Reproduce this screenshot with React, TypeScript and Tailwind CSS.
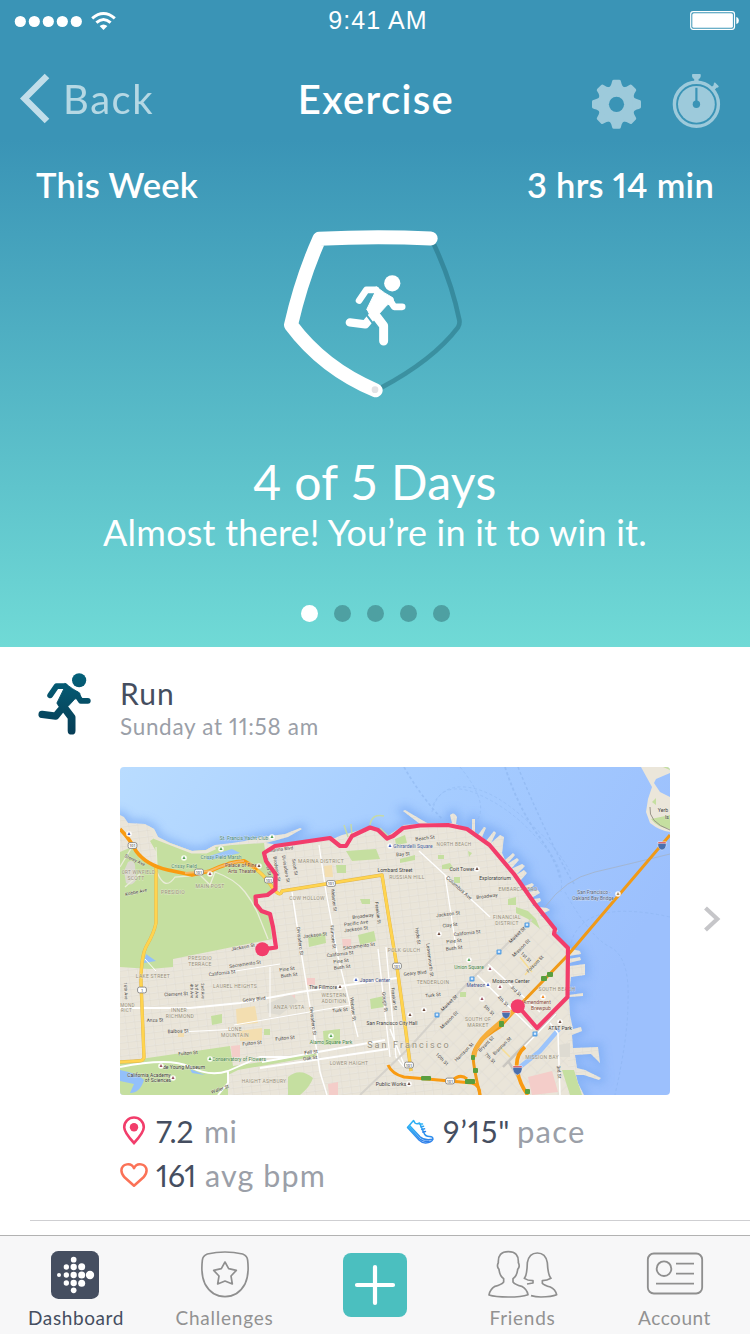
import React from "react";

const FONT = "font-['Lato','Noto_Sans',sans-serif]";

function Runner({ className, fill, gap }: { className: string; fill: string; gap?: string }) {
  return (
    <svg viewBox="253 195 183 214" className={className} fill="none">
      <defs>
        <linearGradient id="navy" x1="0" y1="195" x2="0" y2="409" gradientUnits="userSpaceOnUse">
          <stop offset="0" stopColor="#04617a" />
          <stop offset="0.6" stopColor="#064a62" />
          <stop offset="1" stopColor="#073d56" />
        </linearGradient>
      </defs>
      <g stroke={fill} strokeLinecap="round" strokeLinejoin="round">
        <circle cx="395" cy="220" r="24.5" fill={fill} stroke="none" />
        <path d="M267 338L314 344L332 322" strokeWidth="25" />
        {gap && <path d="M312 308L343 349" stroke={gap} strokeWidth="6" />}
        <path d="M295 272L317 240H346" strokeWidth="20" />
        <path d="M385 268L401 291H425" strokeWidth="20" />
        <path d="M334 302L369 348V394" strokeWidth="27" />
        <path d="M347 231L372 249L397 264L400 278L380 285L357 310L336 318L318 299L342 250Z" fill={fill} strokeWidth="3" />
      </g>
    </svg>
  );
}

function StatusBar() {
  return (
    <div className="flex h-[40px] items-center">
      <svg className="h-[40px] w-[250px]" viewBox="0 0 250 40" fill="#fff">
        {[20.3, 34.3, 48.3, 62.3, 76.3].map((x) => (
          <circle key={x} cx={x} cy="21.5" r="5.6" />
        ))}
        <g fill="none" stroke="#fff" strokeWidth="3">
          <path d="M92.2 18.4Q103.500 8.600 114.800 18.400" />
          <path d="M96.400 22.600Q103.500 16.400 110.600 22.600" />
        </g>
        <path d="M99.600 26Q103.500 22.800 107.400 26L103.500 30Z" />
      </svg>
      <div className="h-[40px] w-[256px] text-center font-['Liberation_Sans',Arial,sans-serif] text-[25px] leading-[41px] tracking-[1.1px] text-white">
        9:41 AM
      </div>
      <svg className="h-[40px] w-[244px]" viewBox="506 0 244 40">
        <rect x="690.700" y="11.700" width="43.800" height="17.600" rx="2.500" fill="none" stroke="#fff" strokeWidth="1.200" />
        <rect x="692.300" y="13.200" width="40.600" height="14.600" rx="1.600" fill="#fff" />
        <path d="M736.300 17Q738.800 17.500 738.800 20.500T736.300 24Z" fill="#fff" />
      </svg>
    </div>
  );
}

function NavBar() {
  return (
    <div className="flex h-[110px]">
      <div className="flex w-[250px] pl-[20px] text-[#c3e0ea]">
        <svg className="mt-[33px] h-[52px] w-[30px]" viewBox="0 0 30 52" fill="none">
          <path d="M27 3L4.500 25.500L27 48" stroke="#c1deea" strokeWidth="6.500" />
        </svg>
        <span className="ml-[13px] pt-[34px] text-[40px] leading-[50px] tracking-[1.6px] opacity-90">Back</span>
      </div>
      <h1 className="w-[252px] pt-[34px] text-center text-[40px] leading-[50px] font-semibold tracking-[1.350px] text-white">Exercise</h1>
      <svg className="h-[110px] w-[248px]" viewBox="502 40 248 110">
        <defs>
          <mask id="gearHole">
            <rect x="580" y="70" width="80" height="70" fill="#fff" />
            <circle cx="616.500" cy="104.300" r="7.600" fill="#000" />
          </mask>
        </defs>
        <g mask="url(#gearHole)" fill="#9dcadb">
          <circle cx="616.500" cy="104.300" r="18.600" />
          {[0, 45, 90, 135, 180, 225, 270, 315].map((a) => (
            <path
              key={a}
              transform={`rotate(${a} 616.500 104.300)`}
              d="M607.500 88.500Q611.200 86.500 611.900 82Q612.200 79.800 613.600 79.800H619.400Q620.800 79.800 621.100 82Q621.800 86.500 625.500 88.500Z"
            />
          ))}
        </g>
        <g fill="#9dcadb">
          <circle cx="696.400" cy="104.300" r="22" fill="none" stroke="#9dcadb" strokeWidth="3.400" />
          <circle cx="696.400" cy="104.300" r="18.400" />
          <path d="M692.300 74H700.500Q701.500 76.500 700 78.200L698.600 79V82H694.200V79L692.800 78.200Q691.300 76.500 692.300 74Z" />
          <path d="M712.300 90L711 87.500L713.600 85.200Q713.400 83 714.800 82.200L718.800 86.200Q718.300 88 716.500 87.800L714.300 90.300Z" />
          <path d="M696.400 87.800V104" stroke="#3a94b6" strokeWidth="2.200" />
          <circle cx="696.400" cy="104.300" r="3.700" fill="#3a94b6" />
        </g>
      </svg>
    </div>
  );
}

function Hero() {
  return (
    <section className="h-[647px] w-[750px] bg-[linear-gradient(180deg,#3a94b6_0px,#3a94b6_140px,#70dad6_647px)]">
      <StatusBar />
      <NavBar />
      <div className="flex h-[70px] justify-between pr-[36px] pl-[36px] text-[34.500px] leading-[70px] font-semibold text-white">
        <span className="tracking-[0.200px]">This Week</span>
        <span className="tracking-[0.250px] proportional-nums">3 hrs 14 min</span>
      </div>
      <div className="grid h-[200px] place-items-center">
        <div className="col-start-1 row-start-1">
          <svg className="h-[200px] w-[230px]" viewBox="0 30 690 600" fill="none">
            <path d="M518 95Q575 215 598 330Q600 342 594 352Q520 450 360 535" stroke="#1f6675" strokeOpacity="0.45" strokeWidth="14" />
            <path
              d="M512 85.500Q345 77 178 86.500Q125 205 93 345Q190 475 347 541"
              stroke="#fff"
              strokeWidth="42"
              strokeLinecap="round"
              strokeLinejoin="round"
            />
            <circle cx="345" cy="539" r="10" fill="#e2e2e4" />
          </svg>
        </div>
        <div className="col-start-1 row-start-1 pb-[19px]">
          <Runner className="h-[71px] w-[61px]" fill="#fff" gap="#4ba9c1" />
        </div>
      </div>
      <div className="flex flex-col items-center pt-[31px] text-white">
        <p className="text-[48px] leading-[61px] font-normal tracking-[0.350px]">4 of 5 Days</p>
        <p className="text-[36px] leading-[41px] tracking-[0.230px]">Almost there! You’re in it to win it.</p>
      </div>
      <div className="flex justify-center gap-[16px] pt-[52px] pl-px">
        <i className="size-[17px] rounded-full bg-white" />
        <i className="size-[17px] rounded-full bg-[#4ea0a2]" />
        <i className="size-[17px] rounded-full bg-[#4ea0a2]" />
        <i className="size-[17px] rounded-full bg-[#4ea0a2]" />
        <i className="size-[17px] rounded-full bg-[#4ea0a2]" />
      </div>
    </section>
  );
}

type Label = [string, number, number, number?, string?, number?];
const AREA = "#978f7a";
const STREET = "#45423d";
const PARK = "#43864a";
const POI = "#3c3c3c";

// text, x, y (centre), rotation, colour, size
const LABELS: Label[] = [
  ["St. Francis Yacht Club", 124, 71, 0, "#4a8a78", 4.900],
  ["Crissy Field Marsh", 101, 90, 0, "#4a8a78", 4.900],
  ["Crissy Field", 64, 99, 0, "#4a8a68", 4.900],
  ["Palace of Fine", 121, 98, 0, "#6d4a3c", 5],
  ["Arts Theatre", 122, 104, 0, "#6d4a3c", 5],
  ["ORT WINFIELD", 18.500, 105, 0, AREA, 4.600],
  ["SCOTT", 16, 111, 0, AREA, 5],
  ["MAIN POST", 90, 119, 0, AREA, 5],
  ["PRESIDIO", 53, 125, 0, AREA, 5],
  ["Storey Ave", 15, 93, 25, STREET, 4.600],
  ["Kobbe Ave", 16, 125, -12, STREET, 4.600],
  ["MARINA DISTRICT", 201, 94, 0, AREA, 5],
  ["COW HOLLOW", 187, 131, 0, AREA, 5],
  ["Baker St", 148, 100, 78, STREET, 4.600],
  ["Broderick St", 157, 102, 80, STREET, 4.600],
  ["Divisadero St", 166, 102, 80, STREET, 4.600],
  ["Scott St", 175, 100, 80, STREET, 4.600],
  ["Marina Blvd", 161, 82, -7, STREET, 4.600],
  ["Webster St", 214, 133, 83, STREET, 4.600],
  ["Franklin St", 258, 146, 83, STREET, 4.600],
  ["Broadway", 243, 149, -7, STREET, 4.800],
  ["Pacific Ave", 236, 156, -7, STREET, 4.800],
  ["Jackson St", 236, 162, -7, STREET, 4.800],
  ["Ghirardelli Square", 293, 79, 0, "#4460a0", 4.900],
  ["NORTH BEACH", 334, 77.500, 0, AREA, 4.700],
  ["Beach St", 305, 71, -7, STREET, 4.800],
  ["Bay St", 283, 87, -4, STREET, 4.800],
  ["Lombard Street", 275, 103, 0, POI, 5],
  ["RUSSIAN HILL", 287, 110, 0, AREA, 5],
  ["Coit Tower", 342, 102, 0, POI, 5.200],
  ["Exploratorium", 375, 111, 0, POI, 5],
  ["EMBARCADERO", 398, 122, 0, AREA, 5],
  ["Columbus Ave", 339, 121, 42, STREET, 5],
  ["Broadway", 367, 129, -7, STREET, 4.800],
  ["FINANCIAL", 387, 150, 0, AREA, 5],
  ["DISTRICT", 387, 156, 0, AREA, 5],
  ["Jackson St", 328, 147, -7, STREET, 4.800],
  ["Clay St", 330, 158, -7, STREET, 4.800],
  ["San Francisco -", 474, 125, 0, "#53627e", 4.800],
  ["Oakland Bay Bridge", 473, 131, 0, "#53627e", 4.700],
  ["Yerb", 543, 43, 0, POI, 5.200],
  ["Is", 547, 50, 0, POI, 5.200],
  ["Jackson St", 123, 180, -10, STREET, 4.800],
  ["PRESIDIO", 80, 191, 0, AREA, 5],
  ["TERRACE", 80, 197, 0, AREA, 5],
  ["Sacramento St", 125, 197, -8, STREET, 4.800],
  ["California St", 102, 206, -7, STREET, 4.800],
  ["LAKE STREET", 33, 209, 0, AREA, 5],
  ["LAUREL HEIGHTS", 115, 219, 0, AREA, 5],
  ["Clement St", 56, 227, -3, STREET, 4.800],
  ["Geary Blvd", 134, 232, -6, STREET, 4.800],
  ["16th Ave", 6, 224, 87, STREET, 4.300],
  ["4th Ave", 72, 224, 87, STREET, 4.300],
  ["3rd Ave", 77, 224, 87, STREET, 4.300],
  ["2nd Ave", 83, 224, 87, STREET, 4.300],
  ["MOND", 7.500, 238, 0, AREA, 4.600],
  ["RICT", 6.500, 243.500, 0, AREA, 4.600],
  ["INNER", 59, 243, 0, AREA, 5],
  ["RICHMOND", 60, 249, 0, AREA, 5],
  ["Anza St", 35, 253, -2, STREET, 4.800],
  ["Balboa St", 58, 264, -3, STREET, 4.800],
  ["ANZA VISTA", 169, 240, 0, AREA, 5],
  ["LONE", 115, 262, 0, AREA, 5],
  ["MOUNTAIN", 115, 268, 0, AREA, 5],
  ["Fulton St", 132, 276, -6, STREET, 4.800],
  ["Fulton St", 165, 271, -6, STREET, 4.800],
  ["Fulton St", 68, 286, -5, STREET, 4.800],
  ["Pine St", 167, 202, -7, STREET, 4.800],
  ["Bush St", 169, 208, -7, STREET, 4.800],
  ["Jackson St", 195, 168, -7, STREET, 4.800],
  ["Sacramento St", 239, 179, -7, STREET, 4.800],
  ["California St", 220, 187, -7, STREET, 4.800],
  ["Pine St", 221, 194, -7, STREET, 4.800],
  ["Bush St", 222, 200, -7, STREET, 4.800],
  ["Divisadero St", 180, 174, 83, STREET, 4.800],
  ["Divisadero St", 193, 254, 83, STREET, 4.800],
  ["Fillmore St", 213, 170, 83, STREET, 4.800],
  ["Webster St", 233, 242, 83, STREET, 4.800],
  ["Gough St", 265, 235, 83, STREET, 4.800],
  ["Franklin St", 274, 232, 83, STREET, 4.800],
  ["The Fillmore", 203, 220, 0, POI, 5],
  ["Japan Center", 255, 213, 0, "#3f4f8c", 5],
  ["WESTERN", 214, 228, 0, AREA, 5],
  ["ADDITION", 214, 234, 0, AREA, 5],
  ["Turk St", 220, 243, -6, STREET, 4.800],
  ["San Francisco City Hall", 272, 256, 0, POI, 4.900],
  ["Alamo Square Park", 211, 275, 0, PARK, 4.900],
  ["Fell St", 191, 285, -7, STREET, 4.800],
  ["Oak St", 190, 291, -7, STREET, 4.800],
  ["LOWER HAIGHT", 229, 296, 0, AREA, 4.900],
  ["Conservatory of Flowers", 119, 292, 0, PARK, 4.900],
  ["de Young Museum", 64, 300, 0, POI, 5],
  ["California Academy", 29, 308, 0, POI, 4.900],
  ["of Sciences", 38, 313, 0, POI, 5],
  ["HAIGHT ASHBURY", 144, 314, 0, AREA, 4.900],
  ["Waller St", 100, 322, -20, STREET, 4.600],
  ["Public Works", 271, 317, 0, POI, 5.200],
  ["POLK GULCH", 284, 183, 0, AREA, 5],
  ["California St", 347, 166, -7, STREET, 4.800],
  ["Pine St", 334, 174, -7, STREET, 4.800],
  ["Bush St", 334, 181, -7, STREET, 4.800],
  ["Hyde St", 298, 169, 83, STREET, 4.800],
  ["Leavenworth St", 310, 193, 83, STREET, 4.800],
  ["Geary Blvd", 295, 206, -6, STREET, 4.800],
  ["TENDERLOIN", 313, 215, 0, AREA, 5],
  ["Turk St", 313, 228, -6, STREET, 4.800],
  ["Union Square", 349, 200, 0, PARK, 4.900],
  ["Metreon", 356, 218, 0, "#3f4f8c", 5],
  ["Moscone Center", 391, 214, 0, POI, 5],
  ["Market St", 397, 168, -45, STREET, 4.800],
  ["Mission St", 401, 181, -45, STREET, 4.800],
  ["1st St", 406, 190, 45, STREET, 4.800],
  ["Folsom St", 415, 197, -45, STREET, 4.800],
  ["3rd St", 396, 224, 45, STREET, 4.800],
  ["4th St", 383, 234, 45, STREET, 4.800],
  ["5th St", 369, 243, 45, STREET, 4.800],
  ["7th St", 370, 291, 45, STREET, 4.800],
  ["10th St", 322, 292, 45, STREET, 4.800],
  ["Market St", 329, 236, -45, STREET, 4.800],
  ["Mission St", 329, 253, -45, STREET, 4.800],
  ["Harrison St", 344, 285, -45, STREET, 4.800],
  ["Bryant St", 366, 277, -45, STREET, 4.800],
  ["Brannan St", 382, 279, -45, STREET, 4.800],
  ["SOUTH OF", 358, 252, 0, AREA, 5],
  ["MARKET", 358, 258, 0, AREA, 5],
  ["SOUTH BEACH", 437, 222, 0, AREA, 5],
  ["Amendment", 417, 235, 0, "#8a4c40", 5],
  ["Brewpub", 421, 241, 0, "#8a4c40", 5],
  ["AT&T Park", 440, 261, 0, POI, 5],
  ["MISSION BAY", 422, 290, 0, AREA, 5],
  ["3rd St", 439, 305, 85, STREET, 4.800],
];

const LAND =
  "M0 48L4 50L8 56L25 57L34 62L38 70L50 76L72 84L86 83L95 78L112 76L125 74L142 70L165 67L180 61L182 62L168 70L146 76L158 78L200 72L215 71L222 68L230 66L250 60L258 62L266 70L275 64L284 58L300 57L283 44L285 43L307 56L325 57L332 56L330 48Q334 44 337 50L336 57L347 62L352 63V52H355V65L358 68L364 60L366 61L362 70L366 74L374 64L376 66L371 76L380 68L384 70L382 86L385 93L393 86L395 88L387 97L397 91L399 93L391 102L402 97L405 99L396 108L404 103L407 106L401 113L400 121L412 116L414 118L404 126L418 123L420 126L408 133L420 131L421 134L412 139L427 141L430 143L420 148L432 158L438 164L434 167L448 181L460 184L461 187L449 189L448 192L460 190L461 193L449 196L450 199L465 197V208L451 210L449 228L463 226V229L449 230L450 248L453 262L461 260L462 264L452 268L453 281L478 280L480 296L471 287L455 288L457 301L465 303L481 311L479 313L464 308L456 308L458 316L464 328H0Z";

const PRESIDIO =
  "M0 85L12 80L20 92L37 98L37 86L30 74L36 70L72 84L95 80L112 78L144 76L146 90L152 100L156 122L148 128L136 130L136 140L142 145L150 148L152 172L53 192V200L30 202L0 200Z";

function Tree({ x, y, c = "#55a455" }: { x: number; y: number; c?: string }) {
  return (
    <g>
      <circle cx={x} cy={y} r="2.800" fill="#fff" fillOpacity="0.900" />
      <path d={`M${x} ${y - 2}l1.500 3h-3z`} fill={c} />
    </g>
  );
}

function Shield({ x, y, t }: { x: number; y: number; t: string }) {
  return (
    <g>
      <rect x={x - 4.400} y={y - 2.900} width="8.800" height="5.800" rx="1.800" fill="#fff" stroke="#777" strokeWidth="0.800" />
      <text x={x} y={y + 1.500} fontSize="4" fill="#333" textAnchor="middle">{t}</text>
    </g>
  );
}

function RouteMap() {
  return (
    <svg className="block h-[328px] w-[550px] rounded-[4px]" viewBox="0 0 550 328" fontFamily="Roboto, sans-serif">
      <defs>
        <linearGradient id="water" x1="0" y1="0" x2="1" y2="0.350">
          <stop offset="0" stopColor="#b9dcff" />
          <stop offset="0.550" stopColor="#a5ccff" />
          <stop offset="1" stopColor="#9cc0fd" />
        </linearGradient>
        <pattern id="grid" width="9" height="6.500" patternUnits="userSpaceOnUse" patternTransform="rotate(-7)">
          <path d="M0 0H9M0 0V6.500" stroke="#fbfaf6" strokeWidth="0.900" fill="none" />
          <path d="M0 0.900H9M0.900 0V6.500" stroke="#d3cec2" strokeWidth="0.450" fill="none" />
        </pattern>
        <pattern id="gridSoma" width="13" height="10" patternUnits="userSpaceOnUse" patternTransform="rotate(-45)">
          <path d="M0 0H13M0 0V10" stroke="#f8f6f1" strokeWidth="1" fill="none" />
          <path d="M0 0.900H13M0.900 0V10" stroke="#d3cec2" strokeWidth="0.450" fill="none" />
        </pattern>
        <clipPath id="landClip"><path d={LAND} /></clipPath>
        <filter id="coast" x="-5%" y="-5%" width="110%" height="110%"><feGaussianBlur stdDeviation="4" /></filter>
      </defs>
      <rect width="550" height="328" fill="url(#water)" />
      <path d={LAND} fill="none" stroke="#7fadf4" strokeWidth="8" opacity="0.800" filter="url(#coast)" />
      <g fill="none" stroke="#85aee8" strokeWidth="0.800" strokeDasharray="3 2.500" opacity="0.450">
        <path d="M284 0Q300 28 322 52" strokeWidth="1.600" />
        <path d="M312 45Q318 18 345 20T405 52Q438 80 450 105" />
        <path d="M313 38Q325 12 360 28T420 75Q445 98 441 125" />
        <path d="M385 0Q398 40 418 68T440 112" strokeWidth="1.800" />
        <path d="M398 0Q412 35 430 72T455 118" strokeWidth="1.400" />
        <path d="M340 0Q368 34 358 52" />
        <path d="M445 125Q470 170 490 180T508 235Q508 270 495 328" />
        <path d="M550 150Q460 130 450 180" />
      </g>
      <path d="M425 140Q445 112 475 105T550 87" fill="none" stroke="#a3b2c8" strokeWidth="0.800" />

      <path d="M521 0L532 20L528 32L526 45L530 56Q540 64 550 65V30L540 25L534 16L536 12L550 6V0Z" fill="#ebe6da" />
      <path d="M531 52L550 48V62Q538 61 531 52ZM532 35L536 31V38ZM543 0H550V3Z" fill="#c5dfa0" />
      <path d="M530 40Q528 55 550 63" stroke="#99958a" strokeWidth="1" fill="none" />

      <path d={LAND} fill="#eae5d9" />
      <g clipPath="url(#landClip)">
        <rect width="550" height="328" fill="url(#grid)" />
        <path d="M410 148L448 181V328H335L290 298Z" fill="#eae5d9" />
        <path d="M410 148L448 181V328H335L290 298Z" fill="url(#gridSoma)" />
        <path d={PRESIDIO} fill="#c5dfa0" />
        <path d="M30 57L36 70L72 84H86L95 80" fill="none" stroke="#ebe6d8" strokeWidth="5" />
        <path d="M8 95Q13 92 15 98L16 113Q12 120 6 116L4 104Z" fill="#dcd9d0" />
        <path d="M86 90L112 82L120 86L104 90L88 93Z" fill="#9cc6fa" />
        <path d="M0 295L110 279L113 299L163 292L197 285L198 289L118 303L108 308V328H0Z" fill="#c5dfa0" />
        <path d="M0 303Q10 305 18 308L24 313Q20 326 10 326L14 317L0 314ZM26 187L36 194L24 196ZM70 302L85 308L72 306Z" fill="#93c0fa" />
        <g fill="#c5dfa0">
          <path d="M226 84L256 82L260 92L232 94ZM216 98H226V106H217ZM188 170L205 166L206 176L189 180ZM238 168L254 164L256 174L240 178Z" />
          <path d="M203 264L220 262V276L204 278ZM91 249L102 247V256L92 258ZM168 310Q180 300 193 311Q190 320 180 328H168ZM250 232L264 229V240L251 242Z" />
          <path d="M322 98L330 96L334 102H322ZM388 132L396 130V138H388ZM396 140L408 144L416 152L420 162L408 152L396 146ZM334 110H340V116H334ZM275 72L285 68L287 76L276 78ZM348 84L352 86L349 90Z" />
          <path d="M442 303H454L462 328H450ZM144 262H150V268H144ZM240 132H250V137H242ZM413 318H422V324H413ZM340 225H346V230H340ZM318 88H324V92H318ZM280 92L295 88V93L280 96Z" />
        </g>
        <g fill="#f3deb0">
          <path d="M116 242L135 239L138 256L117 258ZM119 264L142 261V273L120 274ZM153 240H160V245H153ZM204 99L212 98L213 110H205ZM58 266H64V270H58Z" />
        </g>
        <g fill="#f4cdc9">
          <path d="M408 310L432 304L438 325L412 328ZM111 279L120 278V290H112ZM222 172H231V180H223ZM187 211H195V218H187ZM208 317L218 315V328H209ZM164 229L175 228V233H165Z" />
        </g>
        <path d="M147 237L170 227L178 234L160 248L148 246ZM438 278L450 276V290H440Z" fill="#dedbd2" />
        <path d="M439 262L420 284L400 300" stroke="#9cc4fb" strokeWidth="4.500" fill="none" />
        <path d="M383 300L420 262L436 247M388 294L398 310" stroke="#c9c6c0" strokeWidth="2.500" fill="none" />
        <g stroke="#fff" fill="none" strokeWidth="1.900">
          <path d="M0 241H70L120 236L180 225L277 211" />
          <path d="M172 125L180 178L190 240L200 305L207 328" strokeWidth="1.500" />
          <path d="M142 295L265 273M140 301L268 282M108 304L140 290L170 290M108 304V316L98 328M0 300Q50 290 70 300T108 304" />
          <path d="M199 78L206 125L218 190L238 270M258 182L270 290M266 180L276 290L284 300" strokeWidth="1.300" />
          <path d="M299 84L325 108L370 150M325 108L336 180" strokeWidth="1.300" />
          <path d="M357 208L412 262M368 197L420 245M430 256L438 266L440 328M270 262L285 300M404 280L436 247" strokeWidth="1.500" />
          <path d="M114 258L230 238M60 265L120 262M90 208L160 197M25 192L36 204M150 200V250" strokeWidth="1" />
        </g>
        <g stroke="#e9ecd8" fill="none" strokeWidth="1.300">
          <path d="M37 105Q45 125 55 110L80 108L90 118L95 105Q115 112 125 125T140 152L148 172M36 80L37 100M0 100L12 80M5 120L22 105" />
        </g>
        <path d="M412 152L342 222L290 280L240 328" stroke="#d5d2cb" strokeWidth="2" fill="none" />
        <path d="M400 190L412 205M405 208L420 190M380 280L390 290" stroke="#f7dd96" strokeWidth="1.500" fill="none" />
      </g>

      <g fill="none" strokeLinejoin="round">
        <g stroke="#dfb44c" strokeWidth="3.400">
          <path d="M36 100V156Q34 166 27 178Q21 188 21 215L24 290Q24 294 18 294L0 295" />
          <path d="M123 95Q140 102 150 117T162 124L262 108L270 158L277 200L285 258L291 304" />
        </g>
        <g stroke="#ffd44f" strokeWidth="2.700">
          <path d="M36 100V156Q34 166 27 178Q21 188 21 215L24 290Q24 294 18 294L0 295" />
          <path d="M123 95Q140 102 150 117T162 124L262 108L270 158L277 200L285 258L291 304" />
        </g>
        <g stroke="#f99b12" strokeWidth="3.800">
          <path d="M0 62Q10 72 16 84Q26 98 48 103L72 108L90 104Q112 94 124 94L138 102" />
          <path d="M550 68L470 162L448 188L397 241L380 260Q352 277 353 290T360 328" stroke="#f09a18" strokeWidth="3" />
          <path d="M398 240L368 266Q355 278 354 290" stroke="#f6ae3b" strokeWidth="4.500" />
          <path d="M405 280Q395 288 397 303Q400 318 408 328" />
          <path d="M268 298Q272 307 284 310L330 314L352 316Q360 318 360 328M332 314Q340 306 347 312" strokeWidth="3" />
        </g>
        <path d="M65 106L90 104Q112 94 124 94" stroke="#f5b967" strokeWidth="2" />
        <path d="M250 58Q252 46 264 49M228 70L224 58M232 69L231 57M260 61L268 69" stroke="#c5d9a8" strokeWidth="1.500" />
      </g>

      <g textAnchor="middle" stroke="#f3f0e8" strokeOpacity="0.550" strokeWidth="0.800" paintOrder="stroke">
        {LABELS.map(([t, x, y, r = 0, c = STREET, s = 5], i) => (
          <text key={i} x={x} y={y + 1.700} fontSize={s} fill={c} transform={`rotate(${r} ${x} ${y})`} letterSpacing={c === AREA ? 0.300 : 0.050}>
            {t}
          </text>
        ))}
        <text x="289" y="281" fontSize="9" fill="#96907e" letterSpacing="2.100">San Francisco</text>
      </g>

      <Tree x={152} y={70} />
      <Tree x={101} y={82} />
      <Tree x={64} y={91} />
      <Tree x={90} y={292} />
      <Tree x={211} y={269} />
      <Tree x={349} y={193} />
      <Tree x={9} y={67} c="#4460c0" />
      <Tree x={270} y={79} c="#4460c0" />
      <Tree x={236} y={213} c="#4460c0" />
      <Tree x={368} y={218} c="#4460c0" />
      <Tree x={41} y={299} c="#9a4f60" />
      <Tree x={53} y={311} c="#9a4f60" />
      <Tree x={90} y={107} c="#9a4f60" />
      <Tree x={139} y={99} c="#6d4a3c" />
      <Tree x={220} y={220} c="#6d4a3c" />
      <Tree x={319} y={167} c="#6d4a3c" />
      <Tree x={370} y={202} c="#9a4f60" />
      <Tree x={380} y={220} c="#9a4f60" />
      <Tree x={362} y={232} c="#9a4f60" />
      <Tree x={304} y={243} c="#6d4a3c" />
      <Tree x={290} y={248} c="#6d4a3c" />
      <Tree x={289} y={317} c="#6d4a3c" />
      <Tree x={440} y={255} c="#6d4a3c" />
      <Tree x={423} y={230} c="#f08a24" />
      <Tree x={498} y={127} c="#a98b66" />
      <Tree x={357} y={102} c="#6d4a3c" />
      <Shield x={12.500} y={78.500} t="101" />
      <Shield x={79} y={105} t="101" />
      <Shield x={149} y={113} t="101" />
      <Shield x={211} y={116.500} t="101" />
      <Shield x={22} y={223} t="1" />
      <Shield x={277} y={199} t="101" />
      <Shield x={289} y={298} t="101" />
      <Shield x={330} y={314} t="101" />
      <g fill="#56a0e4">
        {[[415, 267], [379, 185], [352, 212], [317, 248], [407, 158]].map(([x, y]) => (
          <g key={x}>
            <rect x={x - 2.500} y={y - 2.500} width="5" height="5" rx="1" />
            <rect x={x - 1.200} y={y - 1.400} width="2.400" height="2.200" fill="#d9ecff" />
          </g>
        ))}
      </g>
      <g fill="#5a9e3e">
        <rect x="301" y="309" width="10" height="4.500" rx="1" />
        <rect x="345" y="312" width="10" height="5" rx="1" />
        <rect x="421" y="209" width="6" height="5" rx="1" />
        <rect x="427" y="205" width="6" height="5" rx="1" />
        <rect x="379" y="254" width="5" height="6" rx="1" />
        <rect x="351" y="288" width="4" height="5" rx="1" />
        <rect x="353" y="301" width="5" height="5" rx="1" />
        <rect x="405" y="322" width="5" height="5" rx="1" />
      </g>
      <g fill="#4a6fae" stroke="#fff" strokeWidth="0.400">
        <path d="M538 75H546Q547 82 542 83Q537 82 538 75ZM382 244H390Q391 250 386 252Q381 250 382 244ZM393 299H402Q403 306 397.500 308Q392 306 393 299Z" />
        <path d="M538 75H546V76.500H538ZM382 244H390V245.500H382ZM393 299H402V300.500H393Z" fill="#d5474c" />
      </g>

      <path
        d="M142.500 182.300L156 180.500L153 160L150 147L141.500 144L136 137L135.500 129.500L147.500 128L155.500 122L155.500 107L146 94L144 86L155 79L210 71L220 79H226L232 69L250 60.500L258 63L267 71.500L273 69L283 61L300 58.500L328 58L347 62L369.500 78L394 107L415 137L435 162L434 167L448 181L447.500 230L417 261L398 239"
        fill="none"
        stroke="#f23d6b"
        strokeWidth="4.200"
        strokeLinejoin="round"
      />
      <circle cx="142.300" cy="182.300" r="7" fill="#f23d6b" />
      <circle cx="397.800" cy="239.300" r="7" fill="#f23d6b" />
    </svg>
  );
}

function Stat({ icon, value, unit, valueClass, unitClass }: { icon: React.ReactNode; value: string; unit: string; valueClass: string; unitClass: string }) {
  return (
    <div className="flex h-[44px] text-[30px] leading-[42px]">
      <div className="w-[36px] shrink-0">{icon}</div>
      <span className={`text-[#454e60] proportional-nums ${valueClass}`}>{value}</span>
      <span className={`text-[#9b9fa8] ${unitClass}`}>{unit}</span>
    </div>
  );
}

function Activity() {
  return (
    <section className="h-[588px] w-[750px] bg-white">
      <div className="flex h-[120px]">
        <div className="w-[120px] pt-[26px] pl-[38px]">
          <Runner className="h-[62px] w-[53px]" fill="url(#navy)" />
        </div>
        <div className="pt-[27px]">
          <h2 className="text-[30px] leading-[38px] tracking-[1px] text-[#454e60]">Run</h2>
          <p className="text-[22.500px] leading-[29px] tracking-[0.680px] text-[#9b9fa8] proportional-nums">Sunday at 11:58 am</p>
        </div>
      </div>
      <div className="flex h-[328px] items-center pl-[120px]">
        <RouteMap />
        <svg className="mt-[-24px] ml-[33px] h-[26px] w-[18px]" viewBox="0 0 18 26" fill="none">
          <path d="M2.500 2L14.300 13L2.500 24" stroke="#c6c6c9" strokeWidth="4.200" />
        </svg>
      </div>
      <div className="grid grid-cols-[285px_1fr] pt-[15px] pl-[120px]">
        <Stat
          value="7.2"
          unit="mi"
          valueClass="w-[39px] tracking-[-0.100px]"
          unitClass="ml-[9px] text-[30.500px] tracking-[0.300px]"
          icon={
            <svg className="mt-[6px] ml-[2px] h-[30px] w-[24px]" viewBox="0 0 24 30" fill="none">
              <path d="M12 27Q2.200 16.500 2.200 11.300A9.800 9.800 0 0 1 21.800 11.300Q21.800 16.500 12 27Z" stroke="#f23d6b" strokeWidth="2.600" />
              <circle cx="12" cy="11.200" r="4.200" fill="#f23d6b" />
            </svg>
          }
        />
        <Stat
          value={"9’15\""}
          unit="pace"
          valueClass="ml-[2px] w-[66px] tracking-[1.100px]"
          unitClass="ml-[8px] text-[31px] tracking-[1.200px]"
          icon={
            <svg className="mt-[8px] h-[28px] w-[30px]" viewBox="0 0 30 28" fill="none" strokeLinejoin="round" strokeLinecap="round">
              <defs>
                <linearGradient id="shoe" x1="0" y1="0" x2="0" y2="1">
                  <stop offset="0" stopColor="#2cb5f5" />
                  <stop offset="1" stopColor="#2f80ea" />
                </linearGradient>
              </defs>
              <g stroke="url(#shoe)" strokeWidth="1.500">
                <path d="M2.500 9.500L8.500 2.500L10 5Q12 6.500 14.500 5L18.800 14.500Q20 18.500 24.500 18.500Q28.500 18.500 27.800 21.500Q26.500 24.500 20.500 25Q17 25 14 22L2.500 9.500Z" />
                <path d="M4.500 7.500L15 18.800Q19.500 23 27.500 21.300M3.500 8.800L14.500 20.800Q18 24 24 23.500" />
                <path d="M14.800 6H17.500M15.800 8.800L18.600 8.200M16.800 11.400L19.600 10.800M17.800 14L20.500 13.400" />
              </g>
            </svg>
          }
        />
        <Stat
          value="161"
          unit="avg bpm"
          valueClass="w-[40px] tracking-[0.100px]"
          unitClass="ml-[9px] text-[30.500px] tracking-[1.100px]"
          icon={
            <svg className="mt-[8px] h-[26px] w-[28px]" viewBox="0 0 28 26" fill="none">
              <path d="M14 23.800L4.500 15.300Q1.400 12.200 1.400 8.300A6.600 6.600 0 0 1 14 6.200A6.600 6.600 0 0 1 26.600 8.300Q26.600 12.200 23.500 15.300Z" stroke="#fb7257" strokeWidth="2.500" strokeLinejoin="round" />
            </svg>
          }
        />
      </div>
      <div className="mt-[22px] ml-[30px] h-px bg-[#cfcfd2]" />
    </section>
  );
}

function TabBar() {
  return (
    <nav className="flex h-[99px] w-[750px] border-t border-[#b2b2b2] bg-[#f7f7f8] text-[19px] leading-[24px] text-[#929292]">
      <div className="flex w-[151px] flex-col items-center pt-[15px] text-[#454e60]">
        <svg className="mr-px h-[48px] w-[48px]" viewBox="153 78 144 144">
          <rect x="153" y="78" width="144" height="144" rx="22" fill="#454e60" />
          <g fill="#fff">
            <circle cx="177" cy="150" r="6" />
            <circle cx="199" cy="126" r="8" />
            <circle cx="199" cy="150" r="8" />
            <circle cx="199" cy="174" r="8" />
            <circle cx="221" cy="104" r="8.500" />
            <circle cx="221" cy="126" r="9.500" />
            <circle cx="221" cy="150" r="9.500" />
            <circle cx="221" cy="174" r="9.500" />
            <circle cx="221" cy="196" r="8.500" />
            <circle cx="245" cy="125" r="10.500" />
            <circle cx="245" cy="150" r="10.500" />
            <circle cx="245" cy="175" r="10.500" />
            <circle cx="270" cy="150" r="12.500" />
          </g>
        </svg>
        <span className="mt-[7px] ml-px tracking-[0.600px]">Dashboard</span>
      </div>
      <div className="flex w-[147px] flex-col items-center pt-[14px]">
        <svg className="h-[49px] w-[50px]" viewBox="600 75 150 147" fill="none" stroke="#8f8f8f" strokeWidth="5">
          <path d="M607 106Q608 92 622 87Q675 75 728 87Q742 92 743 106Q748 150 735 177Q715 214 675 215Q635 214 615 177Q602 150 607 106Z" />
          <path
            d="M675 111L686 131L709 136L693 153L697 177L675 168L653 177L657 153L641 136L664 131Z"
            strokeLinejoin="round"
          />
        </svg>
        <span className="mt-[7px] tracking-[0.750px]">Challenges</span>
      </div>
      <div className="flex w-[154px] flex-col items-center pt-[17px]">
        <svg className="h-[64px] w-[64px]" viewBox="0 0 64 64">
          <rect width="64" height="64" rx="8" fill="#4bbfbf" />
          <path d="M14 32H50M32 14V50" stroke="#fff" strokeWidth="4.200" strokeLinecap="round" />
        </svg>
      </div>
      <div className="flex w-[141px] flex-col items-center pt-[13px]">
        <svg className="h-[50px] w-[72px]" viewBox="336 69 216 150" fill="none" stroke="#8f8f8f" strokeWidth="5" strokeLinejoin="round">
          <path d="M386 158Q374 150 372 130Q364 122 370 110Q368 77 400 77Q432 77 430 110Q436 122 428 130Q426 150 414 158V168Q420 176 440 181Q456 190 459 206Q440 213 400 213Q360 213 342 207Q345 190 360 181Q380 176 386 168Z" />
          <path d="M456 174L474 171V164Q458 164 448 157Q456 148 457 110Q462 81 487 81Q512 81 517 110Q519 148 528 157Q516 164 502 164V172Q508 178 526 183Q541 190 545 206Q530 212 498 213Q482 213 468 209" />
        </svg>
        <span className="mt-[7px] tracking-[0.700px]">Friends</span>
      </div>
      <div className="flex w-[157px] flex-col items-center pt-[16px] pl-[6px]">
        <svg className="h-[43px] w-[58px]" viewBox="813 82 174 129" fill="none" stroke="#8f8f8f" strokeWidth="5.500">
          <rect x="818.500" y="86.500" width="163" height="120" rx="18" />
          <circle cx="867" cy="132" r="22" />
          <path d="M903 117H957M903 147H957M843 177H957" />
        </svg>
        <span className="mt-[11px] tracking-[0.550px]">Account</span>
      </div>
    </nav>
  );
}

export default function App() {
  return (
    <main className={`flex h-[1334px] w-[750px] flex-col overflow-hidden bg-white ${FONT}`}>
      <Hero />
      <Activity />
      <TabBar />
    </main>
  );
}
